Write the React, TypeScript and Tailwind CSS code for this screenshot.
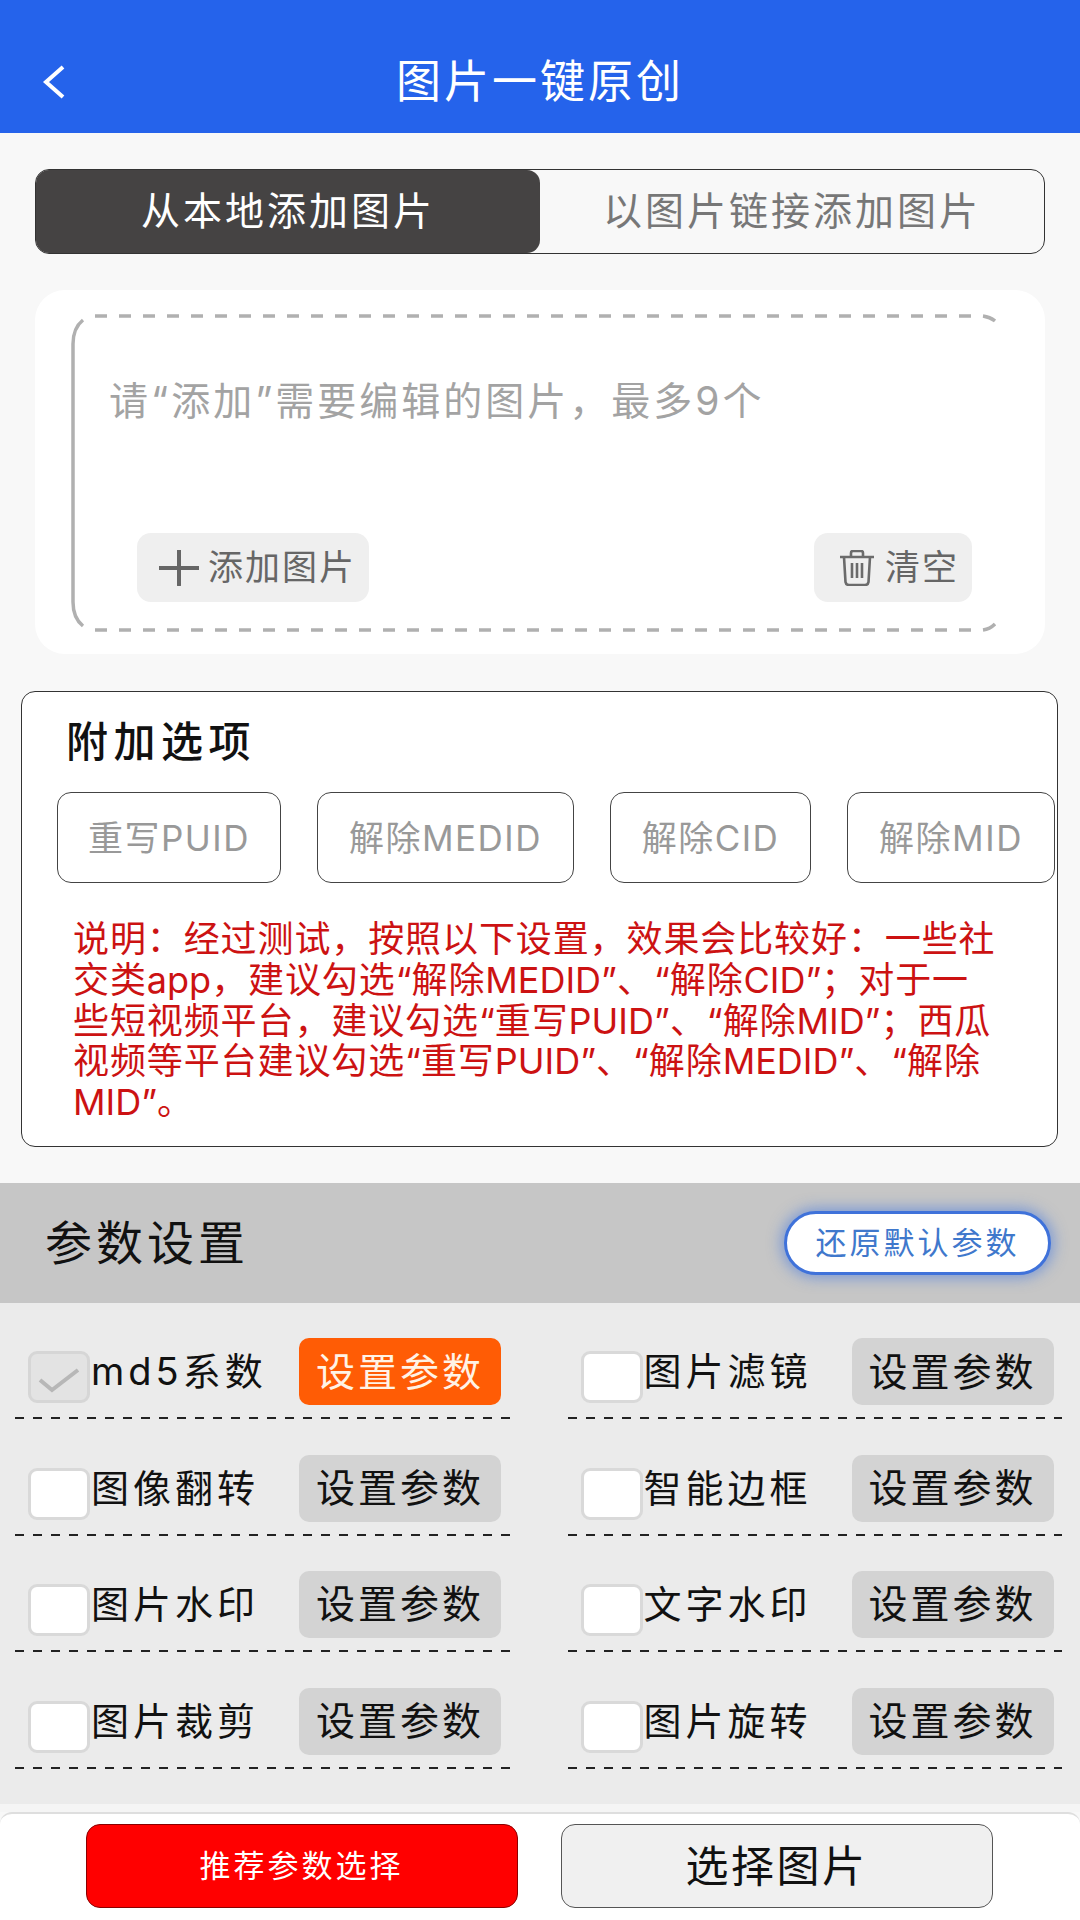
import React from "react"

const redLines = [
  "说明：经过测试，按照以下设置，效果会比较好：一些社",
  "交类app，建议勾选“解除MEDID”、“解除CID”；对于一",
  "些短视频平台，建议勾选“重写PUID”、“解除MID”；西瓜",
  "视频等平台建议勾选“重写PUID”、“解除MEDID”、“解除",
  "MID”。",
]

const chips = [
  { name: "重写PUID", w: "w-[224px]" },
  { name: "解除MEDID", w: "w-[257px]" },
  { name: "解除CID", w: "w-[201px]" },
  { name: "解除MID", w: "w-[208px]" },
]

const params = ["md5系数", "图片滤镜", "图像翻转", "智能边框", "图片水印", "文字水印", "图片裁剪", "图片旋转"]

// 英文和引号字距更紧
const RedLine: React.FC<{ text: string }> = ({ text }) => (
  <div className="whitespace-nowrap">
    {text.split(/([A-Za-z“”]+)/).map((part, i) =>
      i % 2 === 1 ? (
        <span key={i} className="tracking-[0px]">
          {part}
        </span>
      ) : (
        part
      ),
    )}
  </div>
)

const ParamCell: React.FC<{ name: string; active?: boolean }> = ({ name, active }) => (
  <div className="flex h-[116.4px] flex-col justify-end">
    <div className="flex h-[67px] items-start pl-[13px]">
      <div
        className={`mt-[13px] flex h-[52px] w-[62px] shrink-0 items-center justify-center rounded-[9px] border-[3px] ${
          active ? "border-[#d6d6d6] bg-[#e3e3e3]" : "border-[#d9d9d9] bg-white"
        }`}
      >
        {active && (
          <svg width="42" height="26" viewBox="0 0 42 26" className="mt-[6px]">
            <path d="M2 13 L14 23 L40 3" fill="none" stroke="#b7b7b7" strokeWidth="4" />
          </svg>
        )}
      </div>
      <span className="ml-[1px] w-[208px] whitespace-nowrap text-[38px] leading-[67px] tracking-[4px] text-[#111]">{name}</span>
      <button
        className={`h-[67px] w-[202px] shrink-0 rounded-[10px] text-[39px] tracking-[3px] ${
          active ? "bg-[#ff5c05] text-[#fff3e6]" : "bg-[#d3d3d3] text-[#111]"
        }`}
      >
        设置参数
      </button>
    </div>
    <div className="mt-[12px] h-[2px] bg-[repeating-linear-gradient(90deg,#222_0_9px,transparent_9px_18px)]" />
  </div>
)

export default function App() {
  return (
    <div className="flex h-[1920px] w-[1080px] flex-col overflow-hidden bg-[#f8f8f8] font-['Inter','Noto_Sans_CJK_SC',sans-serif]">
      {/* 顶部标题栏 */}
      <header className="relative flex h-[133px] shrink-0 items-center justify-center bg-[#2563eb] pt-[30px]">
        <svg width="24" height="36" viewBox="0 0 24 36" className="absolute left-[42px] top-[64px]">
          <path d="M21 3 L4 18 L21 33" fill="none" stroke="white" strokeWidth="4" />
        </svg>
        <h1 className="text-[45px] font-normal tracking-[3px] text-white">图片一键原创</h1>
      </header>

      {/* 标签 */}
      <div className="mx-[35px] mt-[36px] flex h-[85px] shrink-0 rounded-[14px] border border-[#333]">
        <div className="flex w-[504px] items-center justify-center rounded-[13px] bg-[#454343] text-[39px] tracking-[3px] text-white">
          从本地添加图片
        </div>
        <div className="flex flex-1 items-center justify-center text-[39px] tracking-[3px] text-[#777]">以图片链接添加图片</div>
      </div>

      {/* 添加图片 */}
      <div className="mx-[35px] mt-[36px] h-[364px] shrink-0 rounded-[30px] bg-white pl-[36px] pt-[24px]">
        <div className="relative h-[318px] w-[925px]">
          <svg width="925" height="318" viewBox="0 0 925 318" className="absolute left-0 top-0" fill="none" stroke="#b0b0b0" strokeWidth="3.5">
            <path d="M12 6 Q2 14 2 30 L2 288 Q2 304 12 312" />
            <path d="M24 2 L906 2" strokeDasharray="12 12" />
            <path d="M24 316 L906 316" strokeDasharray="12 12" />
            <path d="M912 2 Q919 3 924 7" />
            <path d="M912 316 Q919 315 924 310" />
          </svg>
          <p className="relative whitespace-nowrap pl-[38px] pt-[64px] text-[39px] leading-[46px] tracking-[3px] text-[#a3a3a3]">请“添加”需要编辑的图片，最多9个</p>
          <div className="relative mt-[109px] flex justify-between pl-[66px] pr-[24px]">
            <button className="flex h-[69px] w-[232px] items-center rounded-[14px] bg-[#efefef] pl-[22px] text-[35px] tracking-[2px] text-[#666]">
              <svg width="40" height="36" viewBox="0 0 40 36" className="mr-[9px] shrink-0">
                <path d="M0 18 L40 18 M20 0 L20 35" stroke="#666" strokeWidth="4" strokeLinecap="round" />
              </svg>
              添加图片
            </button>
            <button className="flex h-[69px] w-[158px] items-center rounded-[14px] bg-[#efefef] pl-[25px] text-[35px] tracking-[2px] text-[#666]">
              <svg width="36" height="36" viewBox="0 0 36 36" fill="none" stroke="#6b6b6b" strokeWidth="2.6" className="mr-[10px] shrink-0">
                <path d="M1 7 L35 7 M12 7 L12 3 Q12 1 14 1 L22 1 Q24 1 24 3 L24 7" />
                <path d="M5 7 L6.5 32 Q7 35 10 35 L26 35 Q29 35 29.5 32 L31 7" />
                <path d="M13 13 L13 28 M18 13 L18 28 M23 13 L23 28" />
              </svg>
              清空
            </button>
          </div>
        </div>
      </div>

      {/* 附加选项 */}
      <div className="ml-[21px] mt-[37px] h-[456px] w-[1037px] shrink-0 rounded-[14px] border border-[#333] bg-white">
        <h2 className="pl-[44px] pt-[22px] text-[42px] font-medium leading-[56px] tracking-[5.5px] text-[#111]">附加选项</h2>
        <div className="mt-[22px] flex gap-[36px] pl-[35px]">
          {chips.map((chip) => (
            <div
              key={chip.name}
              className={`flex h-[91px] shrink-0 items-center justify-center rounded-[14px] border border-[#444] pt-[2px] text-[35px] tracking-[1.5px] text-[#999] ${chip.w}`}
            >
              {chip.name}
            </div>
          ))}
        </div>
        <div className="mt-[36px] pl-[51px] text-[36px] leading-[40.8px] tracking-[0.9px] text-[#cc1212]">
          {redLines.map((line) => (
            <RedLine key={line} text={line} />
          ))}
        </div>
      </div>

      {/* 参数设置 */}
      <div className="mt-[36px] flex h-[120px] shrink-0 items-center justify-between bg-[#c6c6c6] pl-[45px] pr-[29px]">
        <h2 className="text-[47px] font-normal tracking-[4px] text-[#111]">参数设置</h2>
        <button className="h-[64px] w-[267px] rounded-full border-[3px] border-[#3f72da] bg-white text-[31px] tracking-[3px] text-[#3f78cc] shadow-[0_0_14px_3px_rgba(50,110,230,0.5)]">
          还原默认参数
        </button>
      </div>

      <div className="h-[501px] shrink-0 bg-[#ebebeb] pl-[15px]">
        <div className="grid w-[1047px] grid-cols-2 gap-x-[58px]">
          {params.map((name, i) => (
            <ParamCell key={name} name={name} active={i === 0} />
          ))}
        </div>
      </div>

      {/* 底部按钮 */}
      <div className="h-[8px] shrink-0 bg-[#f5f5f5]" />
      <footer className="flex flex-1 justify-center gap-[43px] rounded-t-[12px] border-t-2 border-[#dedede] bg-white pr-[2px] pt-[10px]">
        <button className="h-[84px] w-[432px] rounded-[14px] border border-[#8a0000] bg-[#ff0000] text-[31px] tracking-[3px] text-white">
          推荐参数选择
        </button>
        <button className="h-[84px] w-[432px] rounded-[14px] border border-[#555] bg-[#f0f0f0] text-[43px] tracking-[2.5px] text-[#111]">
          选择图片
        </button>
      </footer>
    </div>
  )
}
